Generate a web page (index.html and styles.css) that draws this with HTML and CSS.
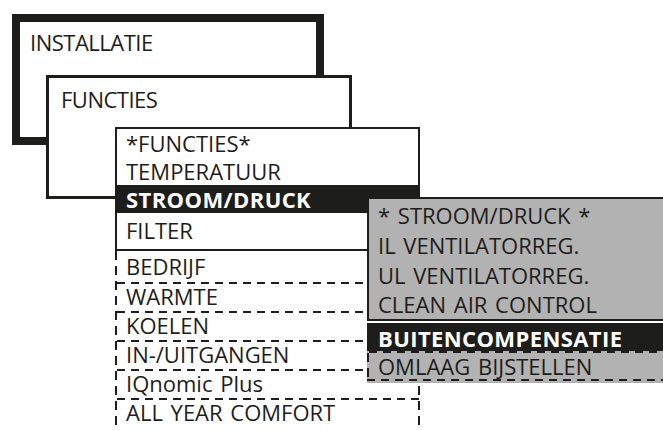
FILE: index.html
```html
<!DOCTYPE html>
<html>
<head>
    <title>Installatie - menu</title>
    <meta name="viewport" content="width=device-width, initial-scale=1">
    <link rel="stylesheet" href="styles.css">
</head>
<body>
    <div class="desk">
        <!-- level 1 -->
        <div class="win win-install">
            <p class="title">INSTALLATIE</p>
        </div>

        <!-- level 2 -->
        <div class="win win-functies">
            <p class="title">FUNCTIES</p>
        </div>

        <!-- level 3: menu with visible part and scroll part -->
        <div class="win win-menu">
            <div class="shown">
                <div class="row">*FUNCTIES*</div>
                <div class="row">TEMPERATUUR</div>
                <div class="row selected">STROOM/DRUCK</div>
                <div class="row last">FILTER</div>
            </div>
            <div class="hidden-rows">
                <div class="row first">BEDRIJF</div>
                <div class="row">WARMTE</div>
                <div class="row">KOELEN</div>
                <div class="row">IN-/UITGANGEN</div>
                <div class="row">IQnomic Plus</div>
                <div class="row">ALL YEAR COMFORT</div>
            </div>
        </div>

        <!-- level 4: submenu -->
        <div class="win win-sub">
            <div class="shown">
                <div class="row">* STROOM/DRUCK *</div>
                <div class="row">IL VENTILATORREG.</div>
                <div class="row">UL VENTILATORREG.</div>
                <div class="row">CLEAN AIR CONTROL</div>
            </div>
            <div class="hidden-rows">
                <div class="row selected">BUITENCOMPENSATIE</div>
                <div class="row">OMLAAG BIJSTELLEN</div>
            </div>
        </div>
    </div>
</body>
</html>
```

FILE: styles.css
```css
body {
    margin: 0;
    background: #ffffff;
    color: #1d1d1b;
    font-family: "Open Sans", "Noto Sans", sans-serif;
    font-size: 22px;
    overflow: hidden;
}
.desk {
    position: relative;
    width: 663px;
    height: 430px;
    overflow: hidden;
}
.win {
    position: absolute;
    box-sizing: border-box;
    background: #ffffff;
}
.title {
    margin: 0;
    line-height: 28px;
    letter-spacing: -0.5px;
}

.win-install {
    left: 12px;
    top: 14px;
    width: 312px;
    height: 131px;
    border: 8px solid #1d1d1b;
    padding: 6px 10px;
}
.win-functies {
    left: 46px;
    top: 75px;
    width: 306px;
    height: 124px;
    border: 3px solid #1d1d1b;
    padding: 7px 12px;
}

.win-menu {
    left: 115px;
    top: 127px;
    width: 305px;
    background: transparent;
}
.win-menu .shown {
    border: 2px solid #1d1d1b;
    background: #ffffff;
}
.row {
    padding: 0 9px;
    line-height: 28px;
    white-space: nowrap;
    word-spacing: 2px;
}
.row.selected {
    background: #1d1d1b;
    color: #ffffff;
    font-weight: bold;
    letter-spacing: 0.4px;
    word-spacing: 0;
}
.win-menu .row.last {
    padding-top: 3px;
    padding-bottom: 5px;
}

/* dashed part of the list */
.hidden-rows {
    background-color: #ffffff;
    background-image:
        repeating-linear-gradient(180deg, #1d1d1b 0 9px, transparent 9px 15px),
        repeating-linear-gradient(180deg, #1d1d1b 0 9px, transparent 9px 15px);
    background-size: 2px 100%, 2px 100%;
    background-position: left top, right top;
    background-repeat: no-repeat;
}
.hidden-rows .row {
    padding: 2px 11px 2px 11px;
    line-height: 25px;
    background-image: repeating-linear-gradient(90deg, #1d1d1b 0 8px, transparent 8px 14px);
    background-size: 100% 2px;
    background-position: 2px 0;
    background-repeat: no-repeat;
}
.hidden-rows .row.first {
    padding-top: 3px;
    padding-bottom: 3px;
    background-image: none;
}
.win-menu .hidden-rows {
    height: 190px;
}

.win-sub {
    left: 367px;
    top: 197px;
    width: 320px;
    background: transparent;
}
.win-sub .shown {
    background: #b2b2b2;
    border-top: 2px solid #1d1d1b;
    border-left: 2px solid #1d1d1b;
    border-bottom: 2px solid #1d1d1b;
    padding-top: 1px;
}
.win-sub .shown .row {
    line-height: 30px;
}
.win-sub .shown .row:last-child {
    line-height: 29px;
}
.win-sub .hidden-rows {
    margin-top: 2px;
    background-color: #b2b2b2;
    background-size: 2px 100%;
    background-position: left top;
    padding-bottom: 2px;
}
.win-sub .hidden-rows .row {
    padding: 2px 9px 0 11px;
    line-height: 26px;
}
.win-sub .hidden-rows .row.selected {
    background-image: none;
    background-color: #1d1d1b;
    padding-top: 2px;
}
.win-sub .hidden-rows::after {
    content: "";
    display: block;
    height: 2px;
    background-image: repeating-linear-gradient(90deg, #1d1d1b 0 8px, transparent 8px 14px);
}
```
